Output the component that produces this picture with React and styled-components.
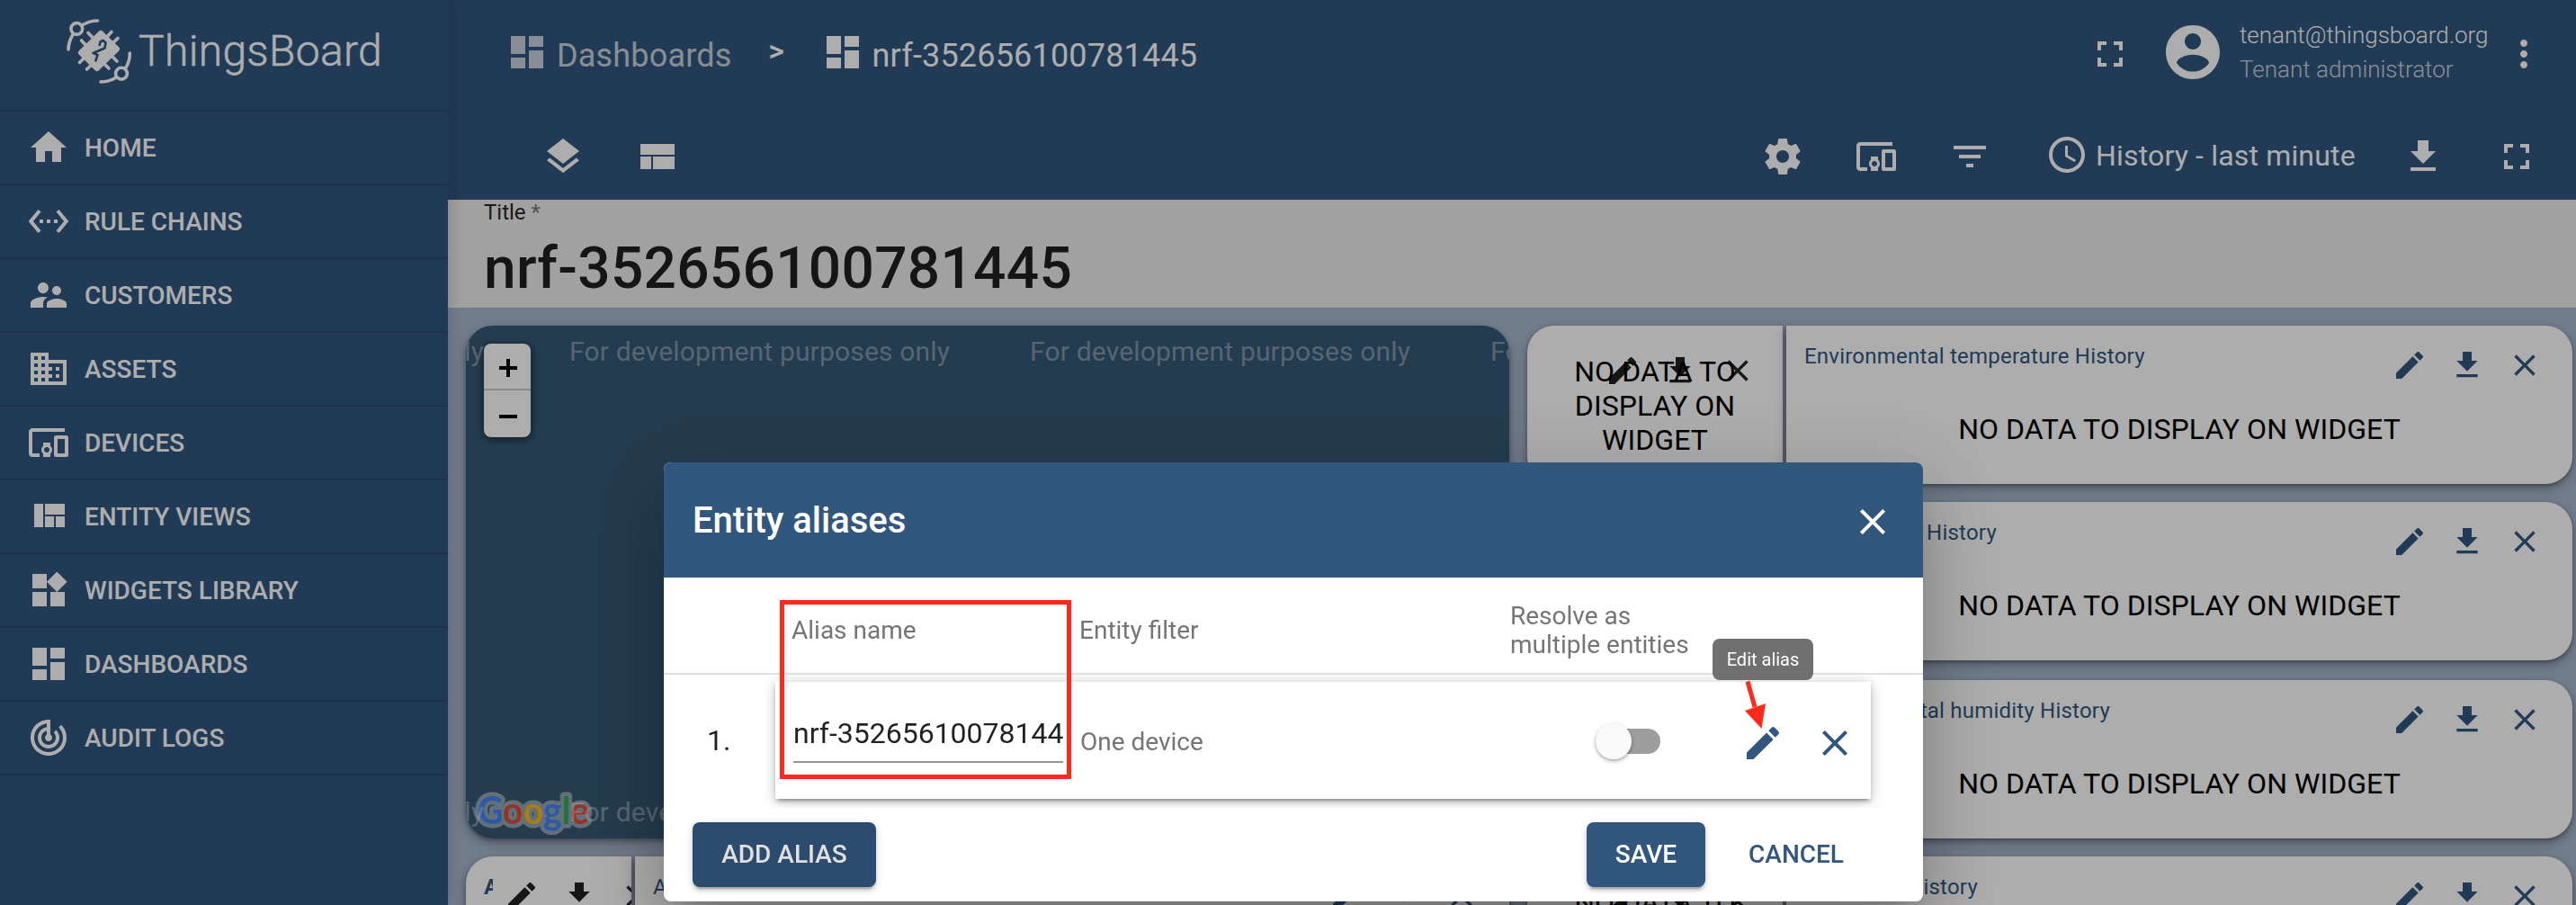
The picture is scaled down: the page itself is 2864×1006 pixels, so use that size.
import React from 'react';
import styled, { createGlobalStyle } from 'styled-components';

const PRIMARY = '#32577f';
const FONT = 'Roboto, "Liberation Sans", sans-serif';

const GlobalStyle = createGlobalStyle`
  *, *::before, *::after { box-sizing: border-box; }
  html, body { margin: 0; padding: 0; overflow: hidden; }
  body { font-family: ${FONT}; }
`;

const PATHS = {
  home: 'M10 20v-6h4v6h5v-8h3L12 3 2 12h3v8z',
  chains: 'M7.77 6.76L6.23 5.48.82 12l5.41 6.52 1.54-1.28L3.42 12l4.35-5.24zM7 13h2v-2H7v2zm10-2h-2v2h2v-2zm-6 2h2v-2h-2v2zm6.77-7.52l-1.54 1.28L20.58 12l-4.35 5.24 1.54 1.28L23.18 12l-5.41-6.52z',
  customers: 'M16.5 12c1.38 0 2.49-1.12 2.49-2.5S17.88 7 16.5 7C15.12 7 14 8.12 14 9.5s1.12 2.5 2.5 2.5zM9 11c1.66 0 2.99-1.34 2.99-3S10.66 5 9 5C7.34 5 6 6.34 6 8s1.34 3 3 3zm7.5 3c-1.83 0-5.5.92-5.5 2.75V19h11v-2.25c0-1.83-3.67-2.75-5.5-2.75zM9 13c-2.33 0-7 1.17-7 3.5V19h7v-2.25c0-.85.33-2.34 2.37-3.47C10.5 13.1 9.66 13 9 13z',
  domain: 'M12 7V3H2v18h20V7H12zM6 19H4v-2h2v2zm0-4H4v-2h2v2zm0-4H4V9h2v2zm0-4H4V5h2v2zm4 12H8v-2h2v2zm0-4H8v-2h2v2zm0-4H8V9h2v2zm0-4H8V5h2v2zm10 12h-8v-2h2v-2h-2v-2h2v-2h-2V9h8v10zm-2-8h-2v2h2v-2zm0 4h-2v2h2v-2z',
  devices: 'M3 6h18V4H3c-1.1 0-2 .9-2 2v12c0 1.1.9 2 2 2h4v-2H3V6zm10 6H9v1.78c-.61.55-1 1.33-1 2.22s.39 1.67 1 2.22V20h4v-1.78c.61-.55 1-1.34 1-2.22s-.39-1.67-1-2.22V12zm-2 5.5c-.83 0-1.5-.67-1.5-1.5s.67-1.5 1.5-1.5 1.5.67 1.5 1.5-.67 1.5-1.5 1.5zM22 8h-6c-.5 0-1 .5-1 1v10c0 .5.5 1 1 1h6c.5 0 1-.5 1-1V9c0-.5-.5-1-1-1zm-1 10h-4v-8h4v8z',
  quilt: 'M10 18h5v-6h-5v6zm-6 0h5V5H4v13zm12 0h5v-6h-5v6zM10 5v6h11V5H10z',
  widgets: 'M13 13v8h8v-8h-8zM3 21h8v-8H3v8zM3 3v8h8V3H3zm13.66-1.31L11 7.34 16.66 13l5.66-5.66-5.66-5.65z',
  dashboard: 'M3 13h8V3H3v10zm0 8h8v-6H3v6zm10 0h8V11h-8v10zm0-18v6h8V3h-8z',
  track: 'M19.07 4.93l-1.41 1.41C19.1 7.79 20 9.79 20 12c0 4.42-3.58 8-8 8s-8-3.58-8-8c0-4.08 3.05-7.44 7-7.93v2.02C8.16 6.57 6 9.03 6 12c0 3.31 2.69 6 6 6s6-2.69 6-6c0-1.66-.67-3.16-1.76-4.24l-1.41 1.41C15.55 9.9 16 10.9 16 12c0 2.21-1.79 4-4 4s-4-1.79-4-4c0-1.86 1.28-3.41 3-3.86v2.14c-.6.35-1 .98-1 1.72 0 1.1.9 2 2 2s2-.9 2-2c0-.74-.4-1.38-1-1.72V2h-1C6.48 2 2 6.48 2 12s4.48 10 10 10 10-4.48 10-10c0-2.76-1.12-5.26-2.93-7.07z',
  layers: 'M11.99 18.54l-7.37-5.73L3 14.07l9 7 9-7-1.63-1.27-7.38 5.74zM12 16l7.36-5.73L21 9l-9-7-9 7 1.63 1.27L12 16z',
  compact: 'M3 19h6v-7H3v7zm7 0h12v-7H10v7zM3 5v6h19V5H3z',
  fullscreen: 'M7 14H5v5h5v-2H7v-3zm-2-4h2V7h3V5H5v5zm12 7h-3v2h5v-5h-2v3zM14 5v2h3v3h2V5h-5z',
  account: 'M12 2C6.48 2 2 6.48 2 12s4.48 10 10 10 10-4.48 10-10S17.52 2 12 2zm0 3c1.66 0 3 1.34 3 3s-1.34 3-3 3-3-1.34-3-3 1.34-3 3-3zm0 14.2c-2.5 0-4.71-1.28-6-3.22.03-1.99 4-3.08 6-3.08 1.99 0 5.97 1.09 6 3.08-1.29 1.94-3.5 3.22-6 3.22z',
  more: 'M12 8c1.1 0 2-.9 2-2s-.9-2-2-2-2 .9-2 2 .9 2 2 2zm0 2c-1.1 0-2 .9-2 2s.9 2 2 2 2-.9 2-2-.9-2-2-2zm0 6c-1.1 0-2 .9-2 2s.9 2 2 2 2-.9 2-2-.9-2-2-2z',
  settings: 'M19.43 12.98c.04-.32.07-.64.07-.98s-.03-.66-.07-.98l2.11-1.65c.19-.15.24-.42.12-.64l-2-3.46c-.12-.22-.39-.3-.61-.22l-2.49 1c-.52-.4-1.08-.73-1.69-.98l-.38-2.65C14.46 2.18 14.25 2 14 2h-4c-.25 0-.46.18-.49.42l-.38 2.65c-.61.25-1.17.59-1.69.98l-2.49-1c-.23-.09-.49 0-.61.22l-2 3.46c-.13.22-.07.49.12.64l2.11 1.65c-.04.32-.07.65-.07.98s.03.66.07.98l-2.11 1.65c-.19.15-.24.42-.12.64l2 3.46c.12.22.39.3.61.22l2.49-1c.52.4 1.08.73 1.69.98l.38 2.65c.03.24.24.42.49.42h4c.25 0 .46-.18.49-.42l.38-2.65c.61-.25 1.17-.59 1.69-.98l2.49 1c.23.09.49 0 .61-.22l2-3.46c.12-.22.07-.49-.12-.64l-2.11-1.65zM12 15.5c-1.93 0-3.5-1.57-3.5-3.5s1.57-3.5 3.5-3.5 3.5 1.57 3.5 3.5-1.57 3.5-3.5 3.5z',
  filter: 'M10 18h4v-2h-4v2zM3 6v2h18V6H3zm3 7h12v-2H6v2z',
  clock: 'M11.99 2C6.47 2 2 6.48 2 12s4.47 10 9.99 10C17.52 22 22 17.52 22 12S17.52 2 11.99 2zM12 20c-4.42 0-8-3.58-8-8s3.58-8 8-8 8 3.58 8 8-3.58 8-8 8zm.5-13H11v6l5.25 3.15.75-1.23-4.5-2.67z',
  download: 'M19 9h-4V3H9v6H5l7 7 7-7zM5 18v2h14v-2H5z',
  edit: 'M3 17.25V21h3.75L17.81 9.94l-3.75-3.75L3 17.25zM20.71 7.04c.39-.39.39-1.02 0-1.41l-2.34-2.34c-.39-.39-1.02-.39-1.41 0l-1.83 1.83 3.75 3.75 1.83-1.83z',
  close: 'M19 6.41L17.59 5 12 10.59 6.41 5 5 6.41 10.59 12 5 17.59 6.41 19 12 13.41 17.59 19 19 17.59 13.41 12z',
};

const Svg = styled.svg`
  display: block;
  flex: none;
  width: ${(p) => p.$size}px;
  height: ${(p) => p.$size}px;
  margin-bottom: ${(p) => p.$lift || 0}px;
  fill: currentColor;
`;

const Icon = ({ name, size = 48, lift }) => (
  <Svg viewBox="0 0 24 24" $size={size} $lift={lift}>
    <path d={PATHS[name]} />
  </Svg>
);

/* ---------- shell ---------- */

const Page = styled.div`
  display: flex;
  width: 2864px;
  height: 1006px;
  overflow: hidden;
  background: #a9b9cf;
`;

const Sidebar = styled.nav`
  position: relative;
  z-index: 2;
  flex: none;
  width: 498px;
  background: ${PRIMARY};
  color: #fff;
  box-shadow: 0 0 18px rgba(0, 0, 0, 0.2);
`;

const Brand = styled.div`
  display: flex;
  align-items: center;
  height: 124px;
  padding: 0 0 10px 70px;
  border-bottom: 2px solid #2b4a6d;
`;

const BrandMark = styled.svg`
  width: 80px;
  height: 80px;
  flex: none;
`;

const BrandName = styled.span`
  margin-left: 4px;
  padding-top: 2px;
  font-size: 48px;
  font-weight: 300;
  line-height: 56px;
  letter-spacing: 0.3px;
  -webkit-text-stroke: 0.5px #fff;
`;

const NavItem = styled.a`
  display: flex;
  align-items: center;
  height: 82px;
  padding-left: 30px;
  gap: 16px;
  border-bottom: 2px solid #2b4a6d;
  font-size: 28px;
  font-weight: 500;
  text-transform: uppercase;
`;

const Main = styled.main`
  display: flex;
  flex-direction: column;
  flex: 1;
  min-width: 0;
`;

const Header = styled.header`
  display: flex;
  align-items: center;
  flex: none;
  height: 124px;
  padding: 0 34px 0 64px;
  background: ${PRIMARY};
  color: #fff;
`;

const Crumb = styled.div`
  display: flex;
  align-items: center;
  gap: 9px;
  font-size: 36px;
  letter-spacing: 0.18px;
  white-space: nowrap;
  opacity: ${(p) => (p.$dim ? 0.73 : 1)};
`;

const CrumbSeparator = styled.span`
  width: 99px;
  padding-bottom: 12px;
  text-align: center;
  font-size: 34px;
  font-weight: 500;
`;

const Spacer = styled.div`
  flex: 1;
`;

const UserInfo = styled.div`
  width: 292px;
  margin-left: 16px;
  padding-bottom: 8px;
  font-size: 26px;
  font-weight: 300;
  line-height: 38px;
  white-space: nowrap;
`;

const Role = styled.div`
  opacity: 0.73;
`;

const Avatar = styled.div`
  margin-left: 32px;
`;

const Toolbar = styled.div`
  display: flex;
  align-items: center;
  flex: none;
  height: 98px;
  padding: 2px 42px 0 104px;
  gap: 56px;
  background: ${PRIMARY};
  color: #fff;
`;

const TimeWindow = styled.div`
  display: flex;
  align-items: center;
  gap: 8px;
  width: 344px;
  padding: 0 0 2px 4px;
  font-size: 32px;
  letter-spacing: 0.17px;
  white-space: nowrap;
`;

const TitleBand = styled.section`
  flex: none;
  height: 120px;
  padding: 0 40px;
  background: #ededed;
  color: rgba(0, 0, 0, 0.87);
`;

const TitleLabel = styled.div`
  font-size: 24px;
  line-height: 28px;

  span { opacity: 0.6; }
`;

const TitleValue = styled.div`
  padding-top: 11px;
  font-size: 64px;
  font-weight: 500;
  line-height: 76px;
  letter-spacing: 0.28px;
`;

/* ---------- dashboard ---------- */

const Canvas = styled.section`
  display: grid;
  grid-template-columns: 1160px 1162px;
  column-gap: 20px;
  flex: 1;
  min-height: 0;
  padding: 20px 4px 0 20px;
  overflow: hidden;
`;

const Column = styled.div`
  display: flex;
  flex-direction: column;
  min-width: 0;
`;

const CARD_SHADOW = '0 2px 4px rgba(0,0,0,.3), 0 5px 14px rgba(0,0,0,.28)';

const MapCard = styled.div`
  display: flex;
  position: relative;
  flex: none;
  height: 570px;
  margin-bottom: 20px;
  padding: 20px;
  border-radius: 30px;
  overflow: hidden;
  background: #365975;
`;

const MapShadow = styled.div`
  flex: none;
  height: 570px;
  margin-bottom: 20px;
  border-radius: 30px;
  box-shadow: ${CARD_SHADOW};
`;

const Watermark = styled.span`
  position: absolute;
  left: ${(p) => p.$x}px;
  top: ${(p) => p.$y}px;
  font: 30px/34px Roboto, Arial, sans-serif;
  letter-spacing: 0.17px;
  white-space: nowrap;
  color: rgba(255, 255, 255, 0.38);
`;

const ZoomControl = styled.div`
  position: relative;
  z-index: 1;
  width: 52px;
  height: 104px;
  border-radius: 8px;
  background: #fff;
  box-shadow: 0 2px 10px rgba(0, 0, 0, 0.6);
`;

const ZoomButton = styled.div`
  display: flex;
  align-items: center;
  justify-content: center;
  height: 52px;
  padding: ${(p) => (p.$first ? '4px 0 0 2px' : '0 0 2px 2px')};
  border-bottom: ${(p) => (p.$first ? '2px solid #ccc' : '0')};
`;

const GoogleLogo = styled.svg`
  position: absolute;
  left: 4px;
  top: 510px;
  width: 150px;
  height: 60px;
`;

const Row = styled.div`
  display: flex;
  flex: none;
  gap: 4px;
  height: 176px;
  margin-bottom: ${(p) => p.$after || 20}px;
`;

const Card = styled.article`
  position: relative;
  flex: ${(p) => (p.$width ? 'none' : 1)};
  width: ${(p) => (p.$width ? `${p.$width}px` : 'auto')};
  padding: 20px 20px;
  border-radius: ${(p) => (p.$side === 'left' ? '30px 0 0 30px' : '0 30px 30px 0')};
  background: #fff;
  box-shadow: ${CARD_SHADOW};
  overflow: hidden;
`;

const CardTitle = styled.div`
  width: ${(p) => (p.$width ? `${p.$width}px` : 'max-content')};
  overflow: hidden;
  white-space: nowrap;
  direction: ${(p) => (p.$end ? 'rtl' : 'ltr')};
  font-size: 24px;
  font-weight: ${(p) => (p.$bold ? 700 : 400)};
  line-height: 28px;
  letter-spacing: 0.22px;
  color: ${PRIMARY};
`;

const CardTools = styled.div`
  position: absolute;
  top: ${(p) => p.$top}px;
  right: ${(p) => p.$right}px;
  display: flex;
  gap: 24px;
  color: ${(p) => (p.$dark ? 'rgba(0,0,0,.87)' : PRIMARY)};
`;

const NoData = styled.div`
  position: relative;
  z-index: 1;
  padding: ${(p) => p.$pad};
  text-align: center;
  font-size: 32px;
  line-height: 38px;
  letter-spacing: 0.05px;
  color: #000;
`;

const Tools = ({ top = 24, right = 33, dark }) => (
  <CardTools $top={top} $right={right} $dark={dark}>
    <Icon name="edit" size={40} />
    <Icon name="download" size={40} />
    <Icon name="close" size={40} />
  </CardTools>
);

const NarrowNoData = () => (
  <Card $width={284} $side="left">
    <Tools top={30} right={30} dark />
    <NoData $pad="12px 20px">NO DATA TO DISPLAY ON WIDGET</NoData>
  </Card>
);

const HistoryCard = ({ title, width }) => (
  <Card $side="right">
    <CardTitle $width={width} $end={!!width}>{title}</CardTitle>
    <Tools />
    <NoData $pad="48px 0 0">NO DATA TO DISPLAY ON WIDGET</NoData>
  </Card>
);

/* ---------- dialog ---------- */

const Backdrop = styled.div`
  position: fixed;
  inset: 0;
  z-index: 10;
  display: flex;
  align-items: flex-start;
  padding: 514px 0 0 738px;
  background: rgba(0, 0, 0, 0.32);
`;

const Dialog = styled.div`
  position: relative;
  width: 1400px;
  height: 488px;
  border-radius: 8px;
  background: #fff;
  box-shadow: 0 22px 30px -14px rgba(0, 0, 0, 0.2), 0 48px 76px 6px rgba(0, 0, 0, 0.14),
    0 18px 92px 16px rgba(0, 0, 0, 0.12);
`;

const DialogHeader = styled.div`
  display: flex;
  align-items: center;
  justify-content: space-between;
  height: 128px;
  padding: 4px 32px 0;
  border-radius: 8px 8px 0 0;
  background: ${PRIMARY};
  color: #fff;
  font-size: 40px;
  font-weight: 500;
`;

const DialogTitle = styled.span`
  padding-bottom: 3px;
`;

const ColumnHeads = styled.div`
  display: grid;
  grid-template-columns: 320px 479px 1fr;
  align-items: center;
  height: 108px;
  padding: 12px 0 0 142px;
  border-bottom: 2px solid #e0e0e0;
  font-size: 28px;
  line-height: 32px;
  color: #757575;
`;

const AliasList = styled.div`
  display: flex;
  height: 148px;
  padding: 8px 58px 10px 48px;
  overflow: hidden;
`;

const RowNumber = styled.div`
  width: 76px;
  padding-top: 46px;
  font-size: 32px;
  line-height: 38px;
  color: rgba(0, 0, 0, 0.87);
`;

const AliasCard = styled.div`
  display: flex;
  flex: 1;
  padding-left: 20px;
  background: #fff;
  box-shadow: 0 6px 2px -4px rgba(0, 0, 0, 0.2), 0 4px 4px rgba(0, 0, 0, 0.14),
    0 2px 14px rgba(0, 0, 0, 0.26);
`;

const AliasInput = styled.div`
  width: 300px;
  height: 90px;
  padding-top: 38px;
  overflow: hidden;
  white-space: nowrap;
  border-bottom: 2px solid #949494;
  font-size: 32px;
  line-height: 38px;
  color: rgba(0, 0, 0, 0.87);
`;

const FilterText = styled.div`
  width: 592px;
  padding: 51px 0 0 19px;
  font-size: 28px;
  line-height: 32px;
  color: #757575;
`;

const Toggle = styled.div`
  position: relative;
  width: 72px;
  height: 28px;
  margin-top: 52px;
  border-radius: 14px;
  background: #9e9e9e;

  &::after {
    content: '';
    position: absolute;
    left: 0;
    top: -6px;
    width: 40px;
    height: 40px;
    border-radius: 50%;
    background: #fafafa;
    box-shadow: 0 2px 4px rgba(0, 0, 0, 0.35);
  }
`;

const RowActions = styled.div`
  display: flex;
  gap: 32px;
  margin: 44px 0 0 90px;
  color: ${PRIMARY};
`;

const DialogFooter = styled.div`
  display: flex;
  align-items: center;
  height: 104px;
  padding: 0 56px 0 32px;
`;

const Button = styled.button`
  width: ${(p) => p.$width}px;
  height: 72px;
  margin: 0 0 0 ${(p) => p.$left || 0}px;
  padding: 0;
  border: 0;
  border-radius: 8px;
  background: ${(p) => (p.$kind === 'text' ? 'transparent' : p.$kind === 'focus' ? '#2c4c6f' : PRIMARY)};
  color: ${(p) => (p.$kind === 'text' ? PRIMARY : p.$kind === 'focus' ? '#e0e0e0' : '#fff')};
  box-shadow: ${(p) => (p.$kind === 'text' ? 'none' : '0 6px 2px -4px rgba(0,0,0,.2), 0 4px 4px rgba(0,0,0,.14), 0 2px 10px rgba(0,0,0,.14)')};
  font: 500 28px/72px ${FONT};
`;

const Tooltip = styled.div`
  position: absolute;
  left: 1166px;
  top: 196px;
  width: 112px;
  height: 46px;
  border-radius: 8px;
  background: rgba(97, 97, 97, 0.9);
  color: #fff;
  text-align: center;
  font-size: 20px;
  line-height: 46px;
`;

const Highlight = styled.div`
  position: absolute;
  left: 129px;
  top: 153px;
  width: 324px;
  height: 199px;
  border: 5px solid #ff2a1c;
`;

const Pointer = styled.svg`
  position: absolute;
  left: 1196px;
  top: 240px;
  width: 40px;
  height: 60px;
`;

const NAV = [
  ['home', 'Home'],
  ['chains', 'Rule chains'],
  ['customers', 'Customers'],
  ['domain', 'Assets'],
  ['devices', 'Devices'],
  ['quilt', 'Entity views'],
  ['widgets', 'Widgets library'],
  ['dashboard', 'Dashboards'],
  ['track', 'Audit logs'],
];

const GoogleLetters = ({ colors }) => (
  <>
    {'Google'.split('').map((c, i) => (
      <tspan key={i} fill={colors ? colors[i] : undefined}>{c}</tspan>
    ))}
  </>
);

const ThingsMark = () => (
  <BrandMark viewBox="70 17 80 80" fill="none" stroke="#fff" strokeWidth="3.6" strokeLinecap="round">
    <circle cx="85.3" cy="33" r="6.4" />
    <path d="M92 28.5Q100 24 108.5 24M81 39.5Q76 48 76 56" />
    <circle cx="135" cy="82.7" r="6.4" />
    <path d="M144.3 60Q144.5 69 139.5 77M112 92Q121 92 128.5 87.5" />
    <path d="M112 38L130 55.5L107.8 77L90 59.5Z" fill="#fff" strokeWidth="6" strokeLinejoin="round" />
    <path d="M116 45L124 36.5M122 52L131 43.5M98 37.5L108 48M90.5 46L98 54M98 61L88.5 70.5M106 69L96.5 78M122 61L130 69M113 69L121 77" />
    <path d="M110.5 52L111.5 47.5L114.5 46L117.5 48.5L116.5 54.5L103.5 60L108.5 62L106 69.5" stroke={PRIMARY} strokeWidth="2.6" strokeLinejoin="round" strokeLinecap="butt" />
  </BrandMark>
);

export default function App() {
  return (
    <>
      <GlobalStyle />
      <Page>
        <Sidebar>
          <Brand>
            <ThingsMark />
            <BrandName>ThingsBoard</BrandName>
          </Brand>
          {NAV.map(([icon, label]) => (
            <NavItem key={label}>
              <Icon name={icon} />
              {label}
            </NavItem>
          ))}
        </Sidebar>

        <Main>
          <Header>
            <Crumb $dim>
              <Icon name="dashboard" lift={8} />
              Dashboards
            </Crumb>
            <CrumbSeparator>&gt;</CrumbSeparator>
            <Crumb>
              <Icon name="dashboard" lift={8} />
              nrf-352656100781445
            </Crumb>
            <Spacer />
            <Icon name="fullscreen" lift={4} />
            <Avatar>
              <Icon name="account" size={72} lift={8} />
            </Avatar>
            <UserInfo>
              tenant@thingsboard.org
              <Role>Tenant administrator</Role>
            </UserInfo>
            <Icon name="more" lift={4} />
          </Header>

          <Toolbar>
            <Icon name="layers" />
            <Icon name="compact" />
            <Spacer />
            <Icon name="settings" />
            <Icon name="devices" />
            <Icon name="filter" />
            <TimeWindow>
              <Icon name="clock" lift={2} />
              History - last minute
            </TimeWindow>
            <Icon name="download" />
            <Icon name="fullscreen" />
          </Toolbar>

          <TitleBand>
            <TitleLabel>Title <span>*</span></TitleLabel>
            <TitleValue>nrf-352656100781445</TitleValue>
          </TitleBand>

          <Canvas>
            <Column>
              <MapShadow>
                <MapCard>
                  <ZoomControl>
                    <ZoomButton $first>
                      <svg width="20" height="20"><path d="M0 10H20M10 0V20" stroke="#000" strokeWidth="4" /></svg>
                    </ZoomButton>
                    <ZoomButton>
                      <svg width="20" height="20"><path d="M0 14H20" stroke="#000" strokeWidth="4" /></svg>
                    </ZoomButton>
                  </ZoomControl>
                  <GoogleLogo viewBox="0 0 150 60">
                    <g fontFamily="Lato" fontSize="42" fontWeight="700">
                      <text x="9" y="44" textLength="124" lengthAdjust="spacingAndGlyphs" fill="#fff" stroke="#fff" strokeWidth="9" strokeLinejoin="round" opacity=".46"><GoogleLetters /></text>
                      <text x="9" y="44" textLength="124" lengthAdjust="spacingAndGlyphs"><GoogleLetters colors={['#4285f4', '#e04a3a', '#f5b81c', '#4285f4', '#34a853', '#e04a3a']} /></text>
                    </g>
                  </GoogleLogo>
                  <Watermark $x={-403} $y={12}>For development purposes only</Watermark>
                  <Watermark $x={115} $y={12}>For development purposes only</Watermark>
                  <Watermark $x={627} $y={12}>For development purposes only</Watermark>
                  <Watermark $x={1139} $y={12}>For development purposes only</Watermark>
                  <Watermark $x={-403} $y={524}>For development purposes only</Watermark>
                  <Watermark $x={115} $y={524}>For development purposes only</Watermark>
                </MapCard>
              </MapShadow>
              <Row>
                <Card $width={184} $side="left">
                  <CardTitle $bold $width={10}>A</CardTitle>
                  <Tools right={-26} dark />
                </Card>
                <Card $side="right">
                  <CardTitle>A</CardTitle>
                  <Tools />
                </Card>
              </Row>
            </Column>
            <Column>
              <Row>
                <NarrowNoData />
                <HistoryCard title="Environmental temperature History" />
              </Row>
              <Row $after={22}>
                <NarrowNoData />
                <HistoryCard title="Temperature History" width={214} />
              </Row>
              <Row>
                <NarrowNoData />
                <HistoryCard title="Environmental humidity History" width={340} />
              </Row>
              <Row>
                <NarrowNoData />
                <HistoryCard title="Humidity History" width={193} />
              </Row>
            </Column>
          </Canvas>
        </Main>
      </Page>

      <Backdrop>
        <Dialog>
          <DialogHeader>
            <DialogTitle>Entity aliases</DialogTitle>
            <Icon name="close" />
          </DialogHeader>
          <ColumnHeads>
            <span>Alias name</span>
            <span>Entity filter</span>
            <span>Resolve as<br />multiple entities</span>
          </ColumnHeads>
          <AliasList>
            <RowNumber>1.</RowNumber>
            <AliasCard>
              <AliasInput>nrf-35265610078144</AliasInput>
              <FilterText>One device</FilterText>
              <Toggle />
              <RowActions>
                <Icon name="edit" />
                <Icon name="close" />
              </RowActions>
            </AliasCard>
          </AliasList>
          <DialogFooter>
            <Button $width={204} $kind="focus">ADD ALIAS</Button>
            <Spacer />
            <Button $width={132}>SAVE</Button>
            <Button $width={170} $left={16} $kind="text">CANCEL</Button>
          </DialogFooter>
          <Highlight />
          <Tooltip>Edit alias</Tooltip>
          <Pointer viewBox="0 0 40 60">
            <path d="M9 3.5L17 32" stroke="#ff2a1c" strokeWidth="5" fill="none" />
            <path d="M6 36L29 28L24.5 56Z" fill="#ff2a1c" />
          </Pointer>
        </Dialog>
      </Backdrop>
    </>
  );
}
